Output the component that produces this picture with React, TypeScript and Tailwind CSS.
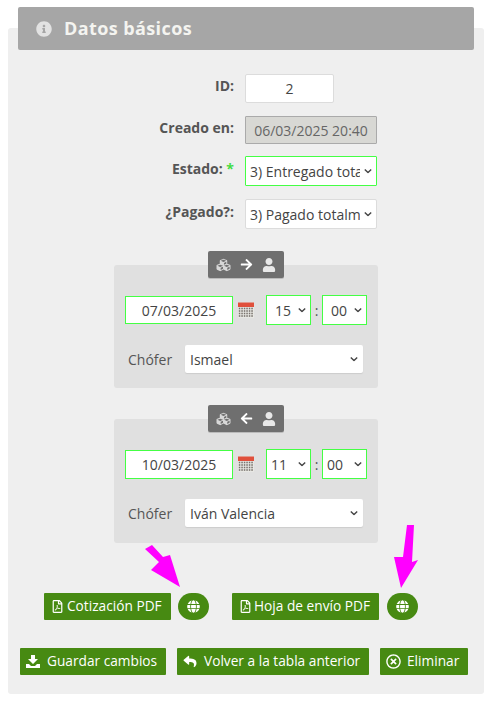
import React from "react";
import { FaInfoCircle, FaCubes, FaArrowRight, FaArrowLeft, FaUser, FaRegFilePdf, FaGlobe, FaReply, FaRegTimesCircle } from "react-icons/fa";

const font = { fontFamily: '"Open Sans", sans-serif' };

function Row({ label, star, mt, pt, children }: { label: string; star?: boolean; mt: string; pt: string; children: React.ReactNode }) {
  return (
    <div className={`flex ${mt}`}>
      <div className={`w-[237px] pr-[3px] text-right text-[14px] leading-[20px] font-bold text-[#555] ${pt}`}>
        {label}
        {star && <span className="text-[#44dd44]"> *</span>}
      </div>
      <div className="ml-[8px]">{children}</div>
    </div>
  );
}

function Sel({ value, cls, wrap = "" }: { value: string; cls: string; wrap?: string }) {
  return (
    <div className={`relative ${wrap}`}>
      <select defaultValue={value} className={`block appearance-none bg-white pr-[16px] text-[14px] text-[#444] outline-none ${cls}`}>
        <option value={value}>{value}</option>
      </select>
      <svg viewBox="0 0 10 6" className="pointer-events-none absolute right-[5px] top-1/2 h-[5px] w-[8px] -translate-y-1/2" fill="none" stroke="#444" strokeWidth="1.7">
        <path d="M1 1l4 4 4-4" />
      </svg>
    </div>
  );
}

function Calendar() {
  return (
    <svg viewBox="0 0 16 16" className="ml-[5px] h-[16px] w-[16px]">
      <rect x="0" y="0.5" width="16" height="15.5" fill="#e8e8e4" />
      <rect x="0" y="0.5" width="16" height="4.5" fill="#e0503c" />
      <g fill="#77716c">
        {[6.5, 9, 11.5, 14].map((y) =>
          [1.5, 4, 6.5, 9, 11.5, 14].map((x) => <rect key={`${x}-${y}`} x={x - 0.7} y={y - 0.8} width="1.5" height="1.6" />)
        )}
      </g>
    </svg>
  );
}

function TransferBox({ back, date, hour, minute, driver, mt, h, dateH, pad }: { back?: boolean; date: string; hour: string; minute: string; driver: string; mt: string; h: string; dateH: string; pad: string }) {
  return (
    <div className={`relative ml-[114px] w-[264px] rounded-[3px] bg-[#e0e0e0] ${h} ${mt}`}>
      <div className="absolute left-[94px] top-[-14px] flex h-[27px] w-[76px] items-center justify-center gap-[9px] rounded-[2px] bg-[#6f6f6f] text-[#e8e8e8] shadow-[0_1px_0_#bbb]">
        <FaCubes className="h-[14px] w-[15px] text-[#d8d8d8]" />
        {back ? <FaArrowLeft className="h-[13px] w-[13px] text-white" /> : <FaArrowRight className="h-[13px] w-[13px] text-white" />}
        <FaUser className="h-[14px] w-[14px]" />
      </div>
      <div className="flex items-center pl-[11px] pt-[30px]">
        <input readOnly value={date} className={`w-[108px] border border-[#44ff44] bg-white text-center text-[14px] text-[#444] outline-none ${dateH}`} />
        <Calendar />
        <Sel value={hour} wrap="ml-[12px]" cls={`h-[30px] w-[45px] border border-[#44ff44] ${pad}`} />
        <span className="w-[11px] text-center text-[14px] text-[#555]">:</span>
        <Sel value={minute} cls={`h-[30px] w-[45px] border border-[#44ff44] ${pad}`} />
      </div>
      <div className="mt-[20px] flex items-center pl-[14px]">
        <span className="w-[57px] text-[14px] text-[#555]">Chófer</span>
        <Sel value={driver} cls="h-[28px] w-[178px] rounded-[2px] pl-[5px] shadow-[0_1px_1px_#ccc]" />
      </div>
    </div>
  );
}

function SaveIcon() {
  return (
    <svg viewBox="0 0 14 13" className="h-[13px] w-[14px]" fill="currentColor">
      <path d="M5 0h4v4h3L7 9 2 4h3z" />
      <path d="M0 9h3l2 2h4l2-2h3v4H0z" />
    </svg>
  );
}

const btn = "flex items-center bg-[#478a12] text-white text-[13.7px] rounded-[1px] h-[27px] whitespace-nowrap";

function Globe({ ml }: { ml: string }) {
  return (
    <div className={`flex h-[27px] w-[31px] items-center justify-center rounded-full bg-[#478a12] ${ml}`}>
      <FaGlobe className="h-[13px] w-[13px] text-white" />
    </div>
  );
}

export default function App() {
  return (
    <div className="relative h-[703px] w-[490px] overflow-hidden bg-white pt-[7px]" style={font}>
      <div className="absolute left-[8px] top-[28px] h-[666px] w-[476px] rounded-[3px] bg-[#efefef]" />
      <div className="relative">
        <div className="mx-[18px] flex h-[43px] w-[456px] items-center rounded-[2px] bg-[#a6a6a6] pl-[18px]">
          <FaInfoCircle className="h-[16px] w-[16px] text-[#e2e2e2]" />
          <span className="ml-[12px] text-[18px] font-bold tracking-[0.4px] text-[#f4f4f0]">Datos básicos</span>
        </div>

        <Row label="ID:" mt="mt-[24px]" pt="pt-[2px]">
          <input readOnly value="2" className="block h-[29px] w-[89px] rounded-[2px] border border-[#dcdcdc] bg-white text-center text-[14px] text-[#444] outline-none" />
        </Row>
        <Row label="Creado en:" mt="mt-[13px]" pt="pt-[2px]">
          <input readOnly value="06/03/2025 20:40" className="block h-[28px] w-[132px] rounded-[1px] border border-[#aaa] bg-[#d8d8d4] text-center text-[14px] text-[#666] outline-none" />
        </Row>
        <Row label="Estado:" star mt="mt-[12px]" pt="pt-[3px]">
          <Sel value="3) Entregado totalmente" cls="h-[30px] w-[132px] rounded-[1px] border border-[#44ff44] pl-[4px]" />
        </Row>
        <Row label="¿Pagado?:" mt="mt-[13px]" pt="pt-[3px]">
          <Sel value="3) Pagado totalmente" cls="h-[30px] w-[132px] rounded-[2px] border border-[#dcdcdc] pl-[4px]" />
        </Row>

        <TransferBox date="07/03/2025" hour="15" minute="00" driver="Ismael" mt="mt-[36px]" h="h-[123px]" dateH="h-[28px]" pad="pl-[8px]" />
        <TransferBox back date="10/03/2025" hour="11" minute="00" driver="Iván Valencia" mt="mt-[31px]" h="h-[124px]" dateH="h-[29px]" pad="pl-[4px]" />

        <div className="mt-[50px] flex pl-[44px]">
          <div className={`${btn} w-[127px] pl-[8px]`}>
            <FaRegFilePdf className="h-[13px] w-[11px]" />
            <span className="ml-[4px]">Cotización PDF</span>
          </div>
          <Globe ml="ml-[7px]" />
          <div className={`${btn} ml-[23px] w-[147px] pl-[8px]`}>
            <FaRegFilePdf className="h-[13px] w-[11px]" />
            <span className="ml-[3px]">Hoja de envío PDF</span>
          </div>
          <Globe ml="ml-[8px]" />
        </div>

        <div className="mt-[28px] flex pl-[20px]">
          <div className={`${btn} w-[146px] pl-[6px]`}>
            <SaveIcon />
            <span className="ml-[7px]">Guardar cambios</span>
          </div>
          <div className={`${btn} ml-[11px] w-[192px] pl-[6px]`}>
            <FaReply className="h-[13px] w-[14px]" />
            <span className="ml-[7px]">Volver a la tabla anterior</span>
          </div>
          <div className={`${btn} ml-[11px] w-[88px] pl-[6px]`}>
            <FaRegTimesCircle className="h-[15px] w-[15px]" />
            <span className="ml-[6px]">Eliminar</span>
          </div>
        </div>
      </div>

      <svg className="pointer-events-none absolute left-[140px] top-[540px] h-[52px] w-[45px]" viewBox="140 540 45 52" fill="#ff00ff">
        <polygon points="145,549 152,545 163,557 170,555 180,587 151,570 159,562" />
      </svg>
      <svg className="pointer-events-none absolute left-[390px] top-[522px] h-[70px] w-[30px]" viewBox="390 522 30 70" fill="#ff00ff">
        <polygon points="407,525 414,525 412,562 418,560 401,588 394,557 403,557" />
      </svg>
    </div>
  );
}
